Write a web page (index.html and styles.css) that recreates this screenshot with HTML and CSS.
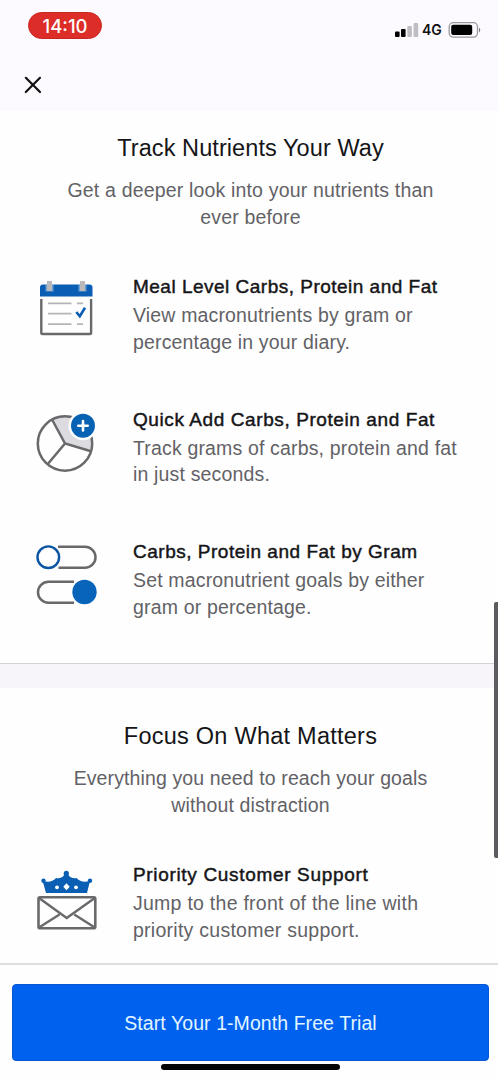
FILE: index.html
```html
<!DOCTYPE html>
<html lang="en">
<head>
<meta charset="utf-8">
<title>Premium</title>
<link rel="stylesheet" href="styles.css">
</head>
<body>
<div class="screen">
  <header class="header">
    <div class="status">
      <span class="time">14:10</span>
      <div class="signals">
        <svg class="bars" width="24" height="14" viewBox="0 0 24 14"><rect x="0" y="8.5" width="4.6" height="5.5" rx="1"/><rect x="6" y="6" width="4.6" height="8" rx="1"/><g fill="#bfbdc1"><rect x="12.3" y="3" width="4.6" height="11" rx="1"/><rect x="18.6" y="0" width="4.6" height="14" rx="1"/></g></svg>
        <span class="network">4G</span>
        <svg width="33" height="16" viewBox="0 0 33 16"><rect x="1.2" y=".7" width="28.3" height="14.4" rx="4" fill="none" stroke="#99979b" stroke-width="1.3"/><rect x="3.2" y="2.8" width="21" height="10.3" rx="2"/><path d="M31 5.5q2.5 2.5 0 5z" fill="#777"/></svg>
      </div>
    </div>
    <button class="close" aria-label="Close"><svg width="18" height="18" viewBox="0 0 18 18"><path d="M1.8 1.8 16 16M16 1.8 1.8 16" stroke="#111" stroke-width="2.2" stroke-linecap="round"/></svg></button>
  </header>
  <main class="content">
    <section class="section">
      <h2 class="heading">Track Nutrients Your Way</h2>
      <p class="intro">Get a deeper look into your nutrients than<br>ever before</p>
      <div class="features">
        <article class="feature">
          <svg class="icon calendar" width="66" height="60" viewBox="0 0 66 60"><path d="M6.3 23v33.7q0 1.3 1.3 1.3h47.2q1.3 0 1.3-1.3V23" fill="none" stroke="#69696c" stroke-width="2.4"/><path d="M5 20.5V11.5q0-3 3-3h46.5q3 0 3 3v9z" fill="#0a5fb4"/><path d="M10.5 8.5h8v7h-8zM43.5 8.5h8v7h-8z" fill="#fcfcfc" opacity=".4"/><path d="M12 5h5v10h-5zM45 5h5v10h-5z" fill="#b9b9bc"/><path d="M13 27.3H36.5M13 37.7H36.5M13 48.2H36.5M42 27.3h6M42 48.2h6" stroke="#b5b5b7" stroke-width="1.7"/><path d="m41.3 36 3.5 4.300L50 31.800" fill="none" stroke="#0a5fb4" stroke-width="2.600"/></svg>
          <div><h3 class="name">Meal Level Carbs, Protein and Fat</h3><p class="text">View macronutrients by gram or<br>percentage in your diary.</p></div>
        </article>
        <article class="feature">
          <svg class="icon pie" width="66" height="60" viewBox="0 0 66 60"><path d="M31 30.5 19 7A26 26 0 0 1 57 38.300z" fill="#dcdce0"/><circle cx="31" cy="30.500" r="27.200" fill="none" stroke="#69696c" stroke-width="2.500"/><path d="M18.300 7 31 30.500 57 38.300M31 30.500 13.800 51" fill="none" stroke="#69696c" stroke-width="2.500"/><circle cx="49" cy="12.700" r="14.500" fill="#fefefe"/><circle cx="49" cy="12.700" r="12" fill="#0762b4"/><path d="M44.300 12.700h9.400M49 8v9.400" stroke="#fff" stroke-width="2.600" stroke-linecap="round"/></svg>
          <div><h3 class="name quick">Quick Add Carbs, Protein and Fat</h3><p class="text track">Track grams of carbs, protein and fat<br>in just seconds.</p></div>
        </article>
        <article class="feature">
          <svg class="icon toggles" width="66" height="60" viewBox="0 0 66 60"><g fill="none" stroke="#69696c" stroke-width="2.500"><path d="M23 1.800H50a10.500 10.500 0 0 1 0 21H23.500M39 36.700H13.500a10.500 10.500 0 0 0 0 21H39"/></g><circle cx="13.300" cy="12.200" r="10.800" fill="#fefefe" stroke="#0b55a5" stroke-width="2.400"/><circle cx="49.500" cy="47" r="12.200" fill="#0864b8"/></svg>
          <div><h3 class="name gram">Carbs, Protein and Fat by Gram</h3><p class="text">Set macronutrient goals by either<br>gram or percentage.</p></div>
        </article>
      </div>
    </section>
    <section class="section second">
      <h2 class="heading focus">Focus On What Matters</h2>
      <p class="intro narrow">Everything you need to reach your goals<br>without distraction</p>
      <div class="features">
        <article class="feature">
          <svg class="icon mail" width="66" height="66" viewBox="0 0 66 66"><path d="M10 29 6.500 16.500q8 3.500 13.500-2.500 4 1 7-1.500 1.500-1.500 1.800-4h3q.3 2.500 1.800 4 3 2.500 7 1.500 5.500 6 13.500 2.500L51 29z" fill="#0a5fb4"/><g fill="#0a5fb4"><circle cx="7.500" cy="16.800" r="2.200"/><circle cx="54" cy="16.800" r="2.200"/><circle cx="30.300" cy="9.400" r="2.600"/></g><g fill="#fff"><path d="m30.500 19.300 3.200 3.500-3.200 3.500-3.200-3.500z"/><circle cx="21" cy="23.300" r="1.900"/><circle cx="40" cy="23.300" r="1.900"/></g><rect x="2.500" y="33.200" width="56.800" height="31" rx="1.500" fill="none" stroke="#69696c" stroke-width="2.600"/><path d="m3 34 27.700 20L58.800 34M3 63.500l20.500-13M58.800 63.500l-20.500-13" fill="none" stroke="#69696c" stroke-width="2.400"/></svg>
          <div><h3 class="name priority">Priority Customer Support</h3><p class="text jump">Jump to the front of the line with<br>priority customer support.</p></div>
        </article>
      </div>
    </section>
  </main>
  <footer class="footer"><button class="cta">Start Your 1-Month Free Trial</button><div class="home"></div></footer>
  <div class="scrollbar"></div>
</div>
</body>
</html>
```
FILE: styles.css
```css
* { box-sizing: border-box; }
body { margin: 0; background: #fefefe; font-family: "Liberation Sans", Arial, sans-serif; color: #151518; }
h2, h3, p { margin: 0; font-weight: 400; white-space: nowrap; }
button { border: 0; padding: 0; font: inherit; }
svg { display: block; flex: none; }
.screen { position: relative; height: 1080px; overflow: hidden; display: flex; flex-direction: column; }
.header { flex: none; height: 111px; background: #fcfafe; padding: 12px 17px 0 28px; }
.status { display: flex; justify-content: space-between; height: 27px; }
.time { width: 74px; height: 27px; border-radius: 14px; background: #dc2d28; border: 1px solid #c92520; color: #fff; font: 500 18.5px/26px Inter, sans-serif; text-align: center; }
.signals { display: flex; align-items: center; height: 16px; margin-top: 10px; }
.bars { margin: 0 3px 0 1px; }
.network { width: 26px; font: 600 14px/16px Inter, sans-serif; color: #111; }
.close { display: block; margin: 37px 0 0 -4px; background: none; }
.content { flex: 1; min-height: 0; overflow: hidden; }
.section { height: 553px; padding-top: 21px; border-bottom: 1.5px solid #d3d2d5; text-align: center; }
.heading { font-size: 23.5px; line-height: 32px; letter-spacing: .08px; padding-left: 3px; }
.focus { letter-spacing: .25px; }
.intro { margin-top: 13px; padding-left: 3px; font-size: 19.5px; line-height: 26.5px; letter-spacing: .17px; color: #626266; }
.narrow { letter-spacing: .12px; }
.features { padding: 41px 30px 0 35px; text-align: left; display: grid; gap: 49.7px; }
.feature { display: flex; height: 83px; }
.icon { margin: 5px 32px 0 0; }
.pie { margin: 9px 33px 0 -1px; }
.toggles { margin: 9px 32px 0 0; }
.mail { margin: 5px 31px 0 1px; }
.name { padding-top: 1px; font-size: 19px; line-height: 30px; letter-spacing: .49px; -webkit-text-stroke: .45px #151518; }
.quick { letter-spacing: .59px; }
.gram { letter-spacing: .51px; }
.priority { letter-spacing: .67px; }
.text { font-size: 19.5px; line-height: 26.5px; letter-spacing: .16px; color: #626266; }
.jump { letter-spacing: .26px; }
.second { border-top: 24px solid #f7f5fa; padding-top: 32px; border-bottom: 0; }
.footer { flex: none; height: 117px; border-top: 2px solid #dddddf; padding: 19px 9px 0 12px; background: #fefefe; }
.cta { display: block; width: 100%; height: 77px; padding-top: 1px; border-radius: 4px; background: #0061ef; border: 1px solid #0756d2; color: #e1f6ff; font-size: 19.5px; letter-spacing: .07px; }
.home { width: 179px; height: 6px; border-radius: 3px; background: #050505; margin: 3px 0 0 149px; }
.scrollbar { position: absolute; right: 0; top: 602px; width: 4px; height: 256px; border-radius: 2px 0 0 2px; background: #5c5b5f; }
```
